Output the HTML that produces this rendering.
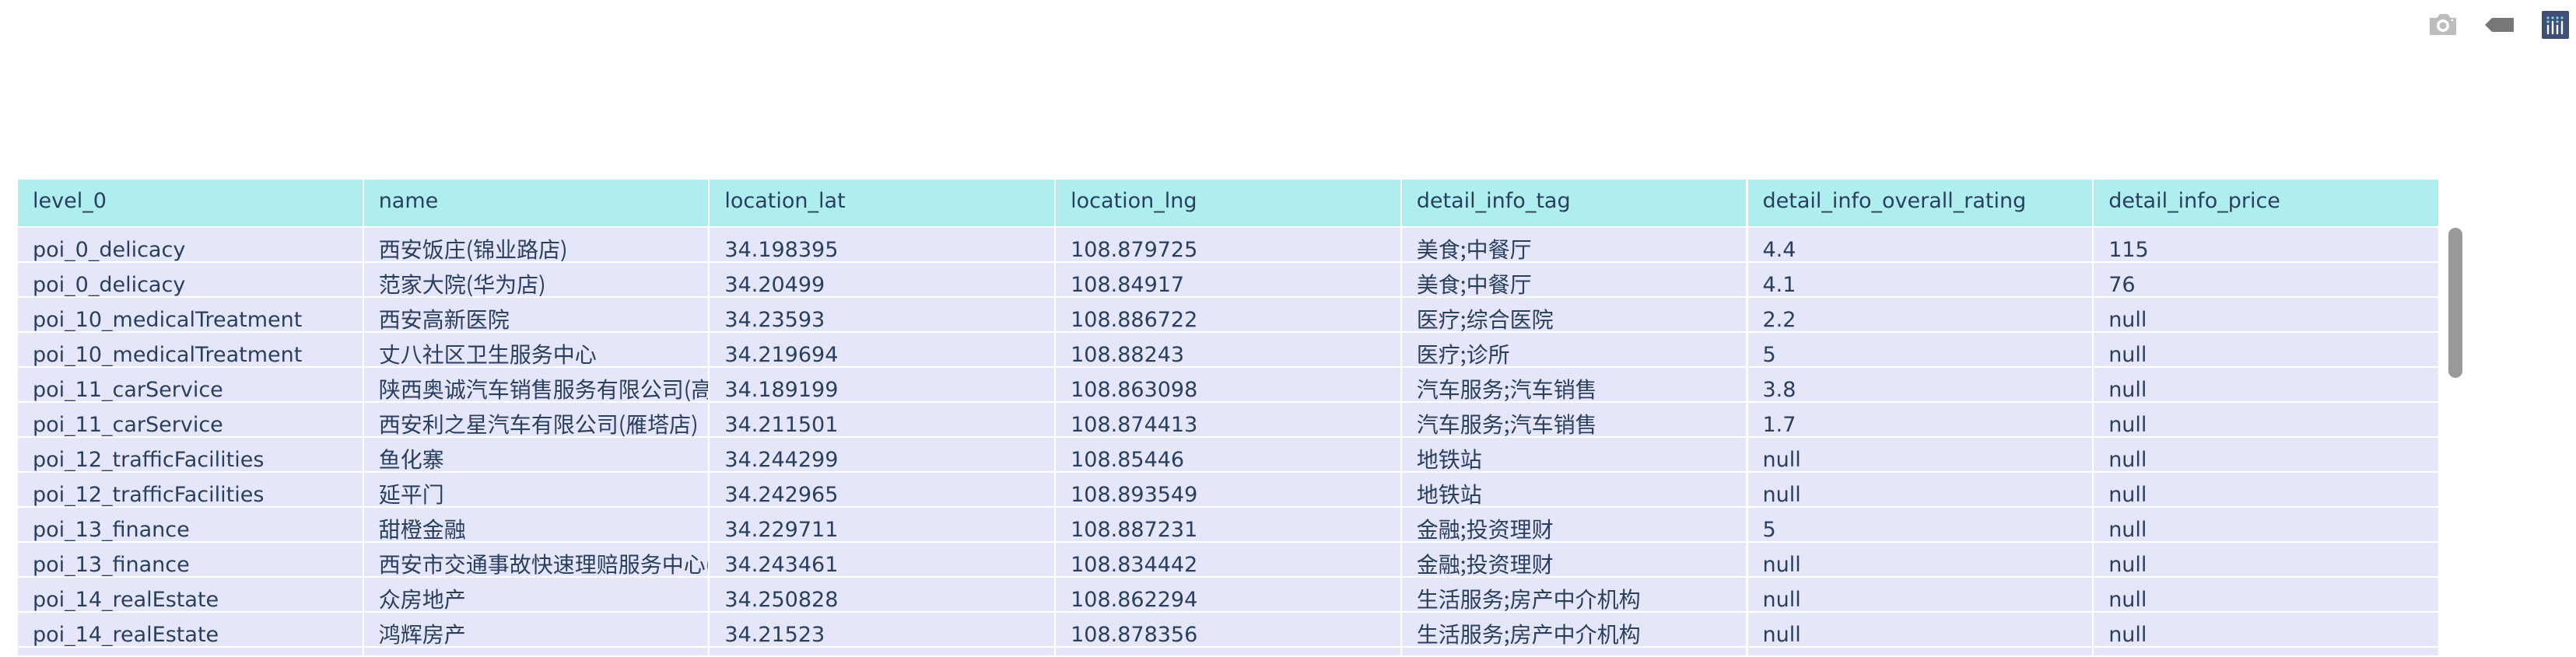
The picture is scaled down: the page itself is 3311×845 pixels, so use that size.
<!DOCTYPE html>
<html><head><meta charset="utf-8"><style>
html,body{margin:0;padding:0;background:#fff;width:3311px;height:845px;overflow:hidden;position:relative}
.c{position:absolute;overflow:hidden;white-space:nowrap;box-sizing:border-box;padding-left:19px;color:#2a3f5f;font-family:"DejaVu Sans","Noto Sans CJK SC",sans-serif;font-size:27px}
.h{background:#afeeee;height:60px;line-height:56px;top:231px}
.d{background:#e6e6fa;height:43px;line-height:46px;padding-top:6px}
.z{font-size:28px;font-family:"Noto Sans CJK SC","DejaVu Sans",sans-serif;padding-top:4px}
</style></head><body>
<div id="t"></div>
<svg style="position:absolute;left:3120px;top:14px" width="40" height="36" viewBox="0 0 40 36"><path d="M3 9h9l4-5h10l4 5h7v22H3z" fill="#bdbdbd"/><circle cx="20" cy="19" r="8" fill="#fff"/><circle cx="20" cy="19" r="4.5" fill="#bdbdbd"/><circle cx="32" cy="12" r="1.3" fill="#fff"/></svg>
<svg style="position:absolute;left:3194px;top:22px" width="38" height="20" viewBox="0 0 38 20"><path d="M0 10L9 1h28v18H9z" fill="#777"/></svg>
<div style="position:absolute;left:3267px;top:14px;width:35px;height:36px;background:#3f4f75;border-radius:2px"></div>
<svg style="position:absolute;left:3267px;top:14px" width="35" height="36" viewBox="0 0 35 36"><g fill="#7fd3e3"><circle cx="8" cy="9" r="1.6"/><circle cx="14" cy="9" r="1.6"/><circle cx="20" cy="9" r="1.6"/><circle cx="26" cy="9" r="1.6"/><circle cx="8" cy="14" r="1.6"/><circle cx="20" cy="14" r="1.6"/></g><g stroke="#fff" stroke-width="2.4" stroke-linecap="round"><path d="M8 19v10M14 14v15M20 19v10M26 14v15"/></g></svg>
<div style="position:absolute;left:3147px;top:293px;width:18px;height:193px;background:#999;border-radius:9px"></div>
<script>
var H=["level_0","name","location_lat","location_lng","detail_info_tag","detail_info_overall_rating","detail_info_price"];
var R=[["poi_0_delicacy","西安饭庄(锦业路店)","34.198395","108.879725","美食;中餐厅","4.4","115"],
["poi_0_delicacy","范家大院(华为店)","34.20499","108.84917","美食;中餐厅","4.1","76"],
["poi_10_medicalTreatment","西安高新医院","34.23593","108.886722","医疗;综合医院","2.2","null"],
["poi_10_medicalTreatment","丈八社区卫生服务中心","34.219694","108.88243","医疗;诊所","5","null"],
["poi_11_carService","陕西奥诚汽车销售服务有限公司(高新店)","34.189199","108.863098","汽车服务;汽车销售","3.8","null"],
["poi_11_carService","西安利之星汽车有限公司(雁塔店)","34.211501","108.874413","汽车服务;汽车销售","1.7","null"],
["poi_12_trafficFacilities","鱼化寨","34.244299","108.85446","地铁站","null","null"],
["poi_12_trafficFacilities","延平门","34.242965","108.893549","地铁站","null","null"],
["poi_13_finance","甜橙金融","34.229711","108.887231","金融;投资理财","5","null"],
["poi_13_finance","西安市交通事故快速理赔服务中心(新","34.243461","108.834442","金融;投资理财","null","null"],
["poi_14_realEstate","众房地产","34.250828","108.862294","生活服务;房产中介机构","null","null"],
["poi_14_realEstate","鸿辉房产","34.21523","108.878356","生活服务;房产中介机构","null","null"],
["","","","","","",""]];
var s="";
for(var j=0;j<7;j++){var x=23+444.7*j;
s+='<div class="c h" style="left:'+x+'px;width:442.7px">'+H[j]+'</div>';
for(var i=0;i<R.length;i++){var y=293+45*i;var h=i==12?10:43;
s+='<div class="c d'+((j==1||j==4)?' z':'')+'" style="left:'+x+'px;width:442.7px;top:'+y+'px;height:'+h+'px">'+R[i][j]+'</div>';}}
document.getElementById("t").innerHTML=s;
</script>
</body></html>
